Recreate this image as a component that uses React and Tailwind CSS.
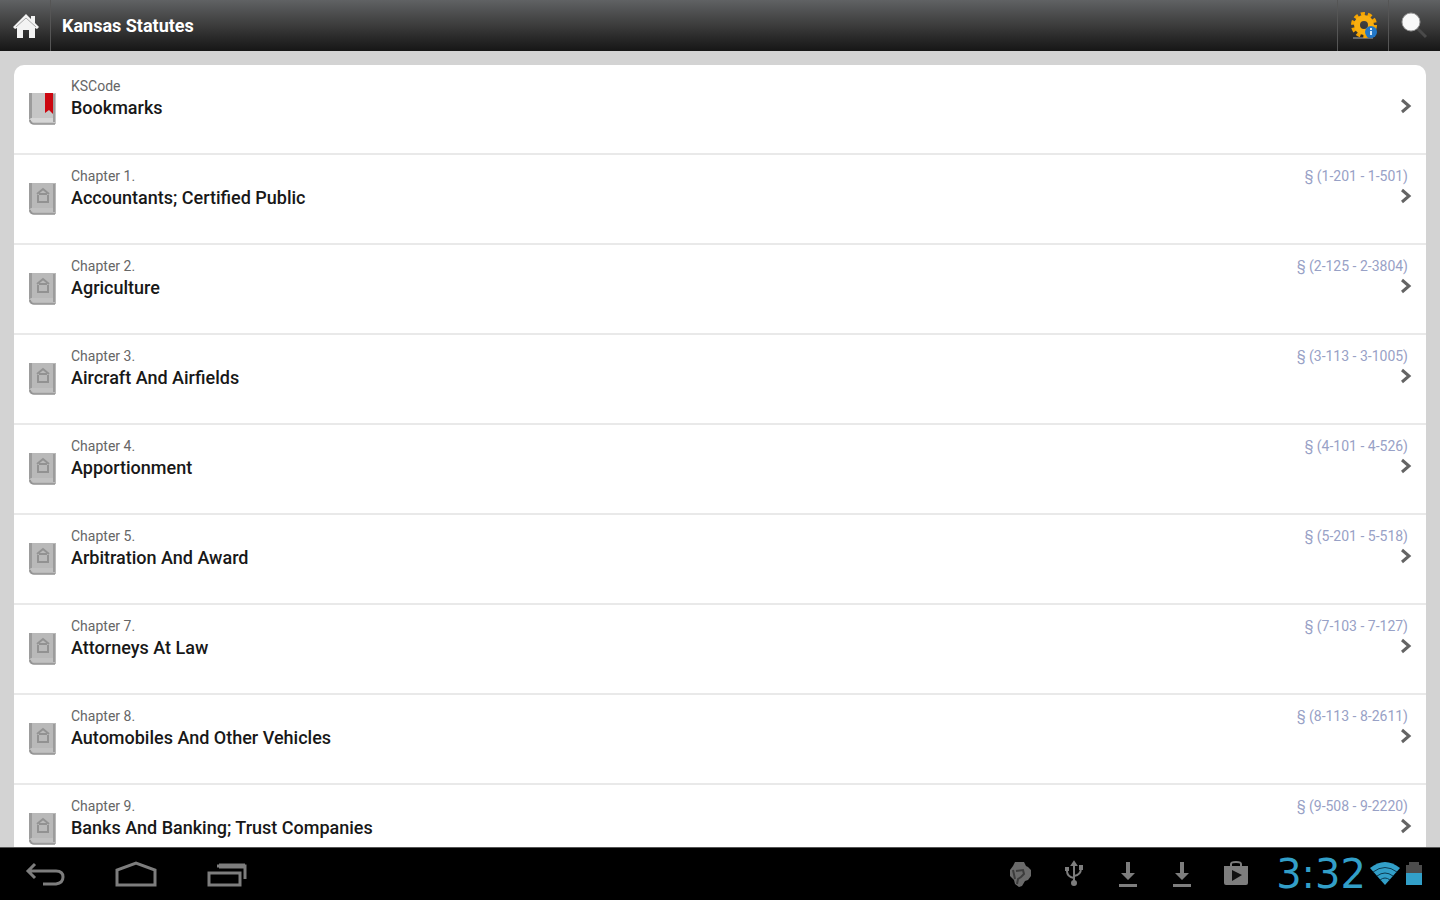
import React from 'react';

const chapters = [
    { label: 'KSCode', title: 'Bookmarks', bookmark: true },
    { label: 'Chapter 1.', title: 'Accountants; Certified Public', range: '§ (1-201 - 1-501)' },
    { label: 'Chapter 2.', title: 'Agriculture', range: '§ (2-125 - 2-3804)' },
    { label: 'Chapter 3.', title: 'Aircraft And Airfields', range: '§ (3-113 - 3-1005)' },
    { label: 'Chapter 4.', title: 'Apportionment', range: '§ (4-101 - 4-526)' },
    { label: 'Chapter 5.', title: 'Arbitration And Award', range: '§ (5-201 - 5-518)' },
    { label: 'Chapter 7.', title: 'Attorneys At Law', range: '§ (7-103 - 7-127)' },
    { label: 'Chapter 8.', title: 'Automobiles And Other Vehicles', range: '§ (8-113 - 8-2611)' },
    { label: 'Chapter 9.', title: 'Banks And Banking; Trust Companies', range: '§ (9-508 - 9-2220)' },
];

function BookIcon({ bookmark }) {
    return (
        <svg className="mt-[27px] h-[34px] w-7 shrink-0" viewBox="0 0 28 34" aria-hidden="true">
            <path d="M1 1h27v31H4q-3 0-3-4z" fill={bookmark ? '#c6c6c6' : '#b9b9b9'} />
            <path d="M1 1h3v26l-3 3z" fill="#9c9c9c" />
            <path d="M1 28q2-3 5-2h19v4H5" fill={bookmark ? '#d6d6d6' : '#c1c1c1'} />
            <path d="M2 28q1 4 4 4h21M26 2v28" stroke="#929292" strokeWidth="1.5" fill="none" />
            {bookmark ? (
                <path d="M17 1h8v21l-4-4-4 3z" fill="#cc0710" />
            ) : (
                <path d="M9 12l6-5 6 5M10 13v6M20 13v6M9 20h12M11 12h8" stroke="#929292" strokeWidth="2" fill="none" />
            )}
        </svg>
    );
}

function Row({ item }) {
    return (
        <li className="border-b-2 border-[#e9e9e9]">
            <a href="#" className="flex h-22 items-start gap-[15px] px-[14px]">
                <BookIcon bookmark={item.bookmark} />
                <div className="min-w-0 flex-1 pt-[13px]">
                    <p className="text-[14px] leading-4 text-[#666]">{item.label}</p>
                    <p className="truncate text-[18px] leading-7 font-medium text-[#181818]">{item.title}</p>
                </div>
                <div className="flex shrink-0 flex-col items-end pt-[13px]">
                    <p className="h-4 pr-1 text-[14px] leading-4 text-[#98a1c6]">{item.range}</p>
                    <svg className="mt-1 h-4 w-3" viewBox="0 0 12 16" fill="none" aria-hidden="true">
                        <path d="M2 2l7 6-7 6" stroke="#646464" strokeWidth="3" />
                    </svg>
                </div>
            </a>
        </li>
    );
}

function Header() {
    return (
        <header className="flex h-[51px] shrink-0 items-stretch bg-linear-to-b from-[#606264] via-[#3c3c3c] to-[#161616] text-white">
            <button aria-label="Home" className="flex w-[51px] items-center justify-center border-r border-[#555] pl-[2px]">
                <svg className="h-[26px] w-7" viewBox="0 0 28 26" aria-hidden="true">
                    <path d="M14 1l5 5V3h4v7l4 4-2 2-2-1v10h-6v-8h-6v8H5V15l-2 1-2-2z" fill="#f3f3f3" />
                    <path d="M4 14L14 5l10 9" stroke="#aaa" strokeWidth="1" fill="none" />
                </svg>
            </button>
            <h1 className="flex-1 truncate pl-[11px] text-[18px] leading-[51px] font-bold">Kansas Statutes</h1>
            <button aria-label="Settings" className="flex w-[51px] items-center justify-center border-l border-[#555] pl-[2px]">
                <svg className="h-7 w-7" viewBox="0 0 28 28" aria-hidden="true">
                    <path d="M3 26h20" stroke="#686868" strokeWidth="2" />
                    <circle cx="14" cy="13" r="11" fill="none" stroke="#f5a400" strokeWidth="4" strokeDasharray="4 2.91" />
                    <circle cx="14" cy="13" r="7" fill="none" stroke="#f9af10" strokeWidth="6" />
                    <circle cx="21" cy="20" r="6" fill="#2277c8" />
                    <path d="M21 19v4M21 16v2" stroke="#cfe6fa" strokeWidth="2" />
                </svg>
            </button>
            <button aria-label="Search" className="flex w-[52px] items-center justify-center border-l border-[#555]">
                <svg className="h-7 w-7" viewBox="0 0 28 28" aria-hidden="true">
                    <path d="M16 16l9 9" stroke="#4a4a4a" strokeWidth="3" />
                    <circle cx="10" cy="10" r="9" fill="#f8f8f8" stroke="#999" strokeWidth="1" />
                </svg>
            </button>
        </header>
    );
}

function DownloadIcon() {
    return (
        <svg className="h-7 w-6" viewBox="0 0 24 28" aria-hidden="true">
            <path d="M10 2h4v11h5l-7 7-7-7h5zM3 24h18v3H3z" fill="#7d7d7d" />
        </svg>
    );
}

function SystemBar() {
    return (
        <footer className="flex h-[53px] shrink-0 items-center justify-between border-t border-[#555] bg-black pr-[18px] pl-[25px]">
            <nav className="flex items-center gap-[50px]">
                <button aria-label="Back">
                    <svg className="h-7 w-10" viewBox="0 0 40 28" fill="none" stroke="#7d7d7d" strokeWidth="3" aria-hidden="true">
                        <path d="M10 4l-7 7 7 7M4 11h27q7 0 7 6t-7 7H18" />
                    </svg>
                </button>
                <button aria-label="Home screen">
                    <svg className="h-7 w-[42px]" viewBox="0 0 42 28" fill="none" stroke="#7d7d7d" strokeWidth="3" aria-hidden="true">
                        <path d="M2 25V10l19-7 19 7v15z" />
                    </svg>
                </button>
                <button aria-label="Recent apps">
                    <svg className="h-7 w-10" viewBox="0 0 40 28" fill="none" stroke="#7d7d7d" strokeWidth="3" aria-hidden="true">
                        <path d="M2 13h31v12H2zM10 6h28v13" />
                        <path d="M12 6h26" strokeWidth="5" />
                    </svg>
                </button>
            </nav>
            <div className="flex items-center">
                <div className="flex items-center gap-[30px] pr-7">
                    <svg className="h-7 w-6" viewBox="0 0 24 28" aria-hidden="true">
                        <path d="M7 2h9l2 4 2 1 3 3v6l-3 4-3 1-3 5-3 1-4-3-1-4-4-4v-6l3-4z" fill="#6a6a6a" />
                        <path d="M8 11l7-1 1 4-3 3-3 2-1 5M5 10l2 9" stroke="#3c3c3c" strokeWidth="2" fill="none" />
                    </svg>
                    <svg className="h-7 w-6" viewBox="0 0 24 28" fill="none" stroke="#7d7d7d" strokeWidth="2" aria-hidden="true">
                        <path d="M12 23V4M12 18q-7-1-7-7M12 16q7-1 7-8" />
                        <path d="M12 2l2 3h-4zM12 21a2 2 0 100 4 2 2 0 000-4M4 8h2v2H4zM18 6h2v3h-2z" fill="#7d7d7d" />
                    </svg>
                    <DownloadIcon />
                    <DownloadIcon />
                    <svg className="h-7 w-6" viewBox="0 0 24 28" aria-hidden="true">
                        <path d="M7 7V4q0-2 5-2t5 2v3" stroke="#7d7d7d" strokeWidth="2" fill="none" />
                        <path d="M0 6h24v17q0 2-2 2H2q-2 0-2-2z" fill="#7d7d7d" />
                        <path d="M8 10l10 5-10 6z" fill="#111" />
                    </svg>
                </div>
                <time className="font-['DejaVu_Sans'] text-[40px] leading-[52px] text-[#329fc8]">3:32</time>
                <svg className="ml-1 h-7 w-[30px]" viewBox="0 0 30 28" aria-hidden="true">
                    <path d="M0 8q15-12 30 0L15 25z" fill="#329fc8" />
                    <path d="M3 12q12-9 24 0M7 16q8-6 16 0M10 20q5-4 10 0" stroke="#0c3a50" strokeWidth="1" fill="none" />
                </svg>
                <svg className="ml-[6px] h-7 w-4" viewBox="0 0 16 28" aria-hidden="true">
                    <path d="M0 5h3V2h10v3h3v8H0z" fill="#4c4c4c" />
                    <path d="M0 13h16v12H0z" fill="#329fc8" />
                </svg>
            </div>
        </footer>
    );
}

function App() {
    return (
        <div className="flex h-screen flex-col bg-[#d3d3d3] font-['Roboto',sans-serif]">
            <Header />
            <main className="min-h-0 flex-1 overflow-hidden px-[14px] pt-[14px]">
                <ul className="overflow-hidden rounded-t-[10px] bg-white">
                    {chapters.map((item) => (
                        <Row key={item.title} item={item} />
                    ))}
                </ul>
            </main>
            <SystemBar />
        </div>
    );
}

export default App;
